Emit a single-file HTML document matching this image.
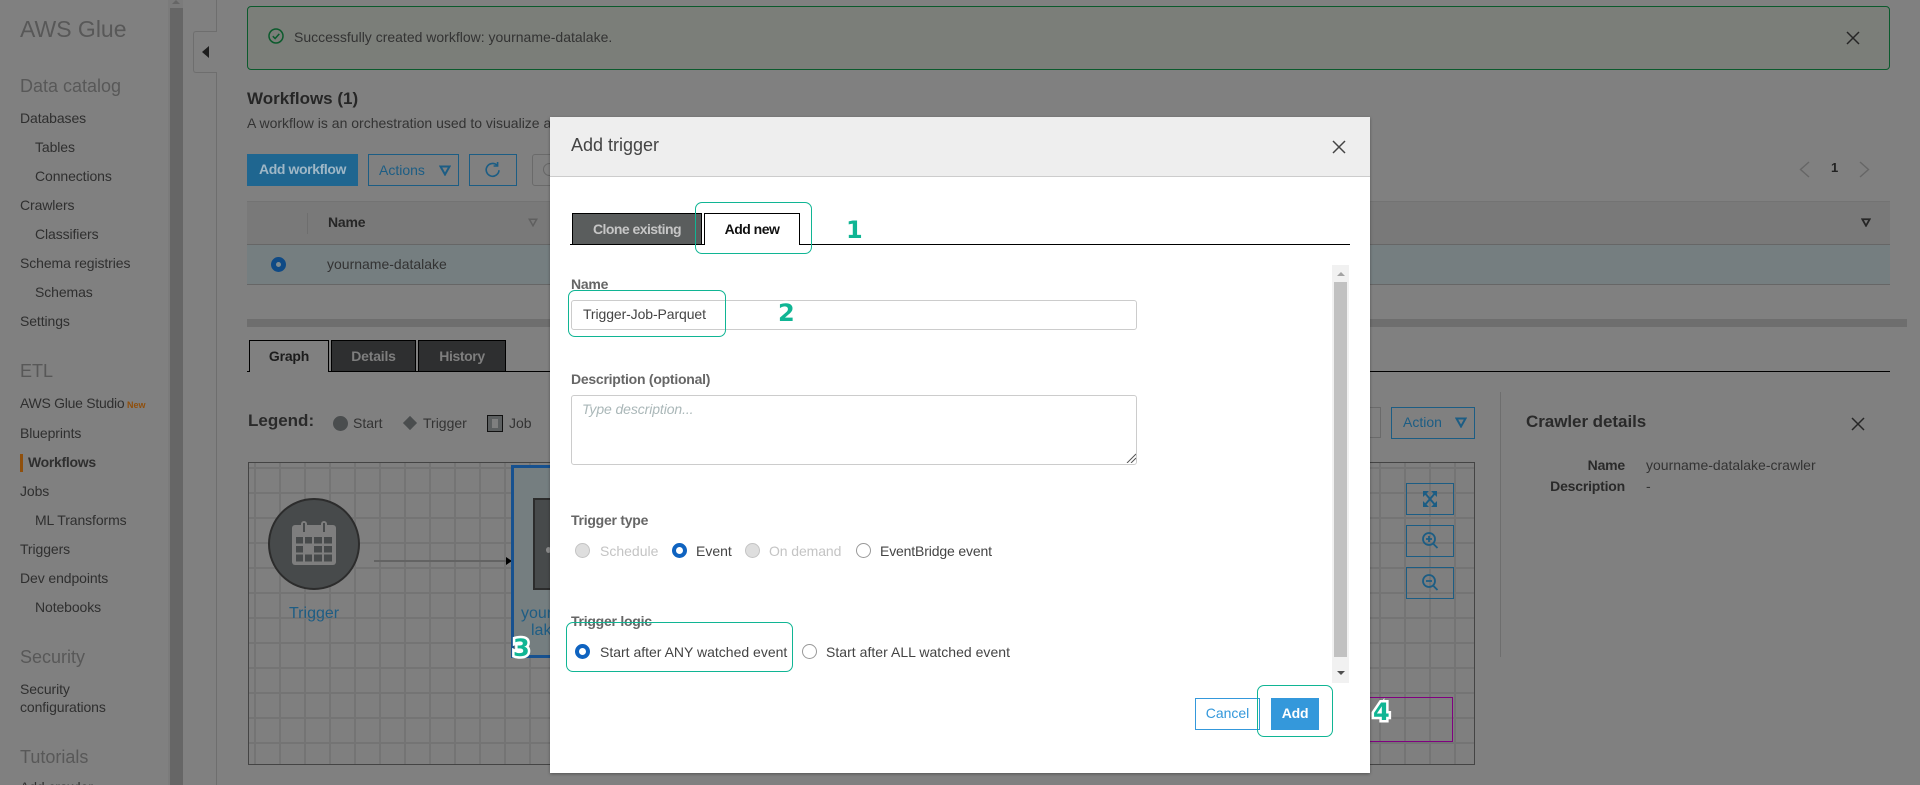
<!DOCTYPE html>
<html><head><meta charset="utf-8"><title>AWS Glue Add trigger</title>
<style>
*{box-sizing:border-box}
html,body{margin:0;padding:0;width:1920px;height:785px;overflow:hidden;background:#808080}
body{position:relative;font-family:"Liberation Sans",sans-serif;font-size:14px;color:#2d2d2d}
.a{position:absolute}
.t{position:absolute;white-space:nowrap;line-height:20px;height:20px}
.n{color:#2f2f2f;font-size:14px;letter-spacing:-.1px}
.h{color:#585858;font-size:18px}
.b{font-weight:bold}
.lbl{color:#666;font-weight:bold;font-size:14px;letter-spacing:-.25px}
.r{position:absolute;width:15px;height:15px;border-radius:50%;background:#fff;border:1px solid #999}
.r.d{background:#dedede;border-color:#c4c4c4}
.r.s{background:#fff;border:4px solid #0f63c0}
.g{position:absolute;border:1.5px solid #10b594;border-radius:7px}
.num{position:absolute;font-family:"DejaVu Sans",sans-serif;font-weight:bold;font-size:24px;line-height:26px;color:#10b594;-webkit-text-stroke:5px #fff;paint-order:stroke fill}
.zb{position:absolute;left:1406px;width:48px;height:32px;border:1px solid #1c5d84}
.zb svg{position:absolute;left:0;top:0}
</style></head><body>

<!-- sidebar -->
<div class="a" style="left:168px;top:0;width:15px;height:785px;background:#7b7b7b"></div>
<div class="a" style="left:170px;top:8px;width:13px;height:777px;background:#666"></div>
<div class="a" style="left:172px;top:0;width:0;height:0;border:4px solid transparent;border-top:0;border-bottom:4px solid #666"></div>
<div class="t" style="left:20px;top:19px;font-size:23px;color:#585858">AWS Glue</div>
<div class="t h" style="left:20px;top:76px">Data catalog</div>
<div class="t n" style="left:20px;top:108px">Databases</div>
<div class="t n" style="left:35px;top:137px">Tables</div>
<div class="t n" style="left:35px;top:166px">Connections</div>
<div class="t n" style="left:20px;top:195px">Crawlers</div>
<div class="t n" style="left:35px;top:224px">Classifiers</div>
<div class="t n" style="left:20px;top:253px">Schema registries</div>
<div class="t n" style="left:35px;top:282px">Schemas</div>
<div class="t n" style="left:20px;top:311px">Settings</div>
<div class="t h" style="left:20px;top:361px">ETL</div>
<div class="t n" style="left:20px;top:393px;letter-spacing:-.27px">AWS Glue Studio</div>
<div class="t b" style="left:127px;top:395px;font-size:9px;color:#8f4f0c">New</div>
<div class="t n" style="left:20px;top:423px">Blueprints</div>
<div class="a" style="left:20px;top:454px;width:3px;height:18px;background:#8f4f0c"></div>
<div class="t n b" style="left:28px;top:452px;letter-spacing:-.3px">Workflows</div>
<div class="t n" style="left:20px;top:481px">Jobs</div>
<div class="t n" style="left:35px;top:510px">ML Transforms</div>
<div class="t n" style="left:20px;top:539px">Triggers</div>
<div class="t n" style="left:20px;top:568px">Dev endpoints</div>
<div class="t n" style="left:35px;top:597px">Notebooks</div>
<div class="t h" style="left:20px;top:647px">Security</div>
<div class="t n" style="left:20px;top:679px">Security</div>
<div class="t n" style="left:20px;top:697px">configurations</div>
<div class="t h" style="left:20px;top:747px">Tutorials</div>
<div class="t n" style="left:20px;top:777px">Add crawler</div>

<!-- collapse handle -->
<div class="a" style="left:216px;top:0;width:1px;height:785px;background:#6e6e6e"></div>
<div class="a" style="left:193px;top:31px;width:24px;height:42px;background:#808080;border:1px solid #6e6e6e;border-right:0;border-radius:3px 0 0 3px"></div>
<div class="a" style="left:202px;top:46px;width:0;height:0;border:6px solid transparent;border-left:0;border-right:7px solid #1d1d1d"></div>

<!-- flash -->
<div class="a" style="left:247px;top:6px;width:1643px;height:64px;background:#7b7e79;border:1px solid #0b5a2c;border-radius:4px"></div>
<svg class="a" style="left:267px;top:27px" width="18" height="18" viewBox="0 0 18 18" fill="none" stroke="#0b5a2c" stroke-width="1.5"><circle cx="9" cy="9" r="7"/><path d="M5.8 9.2l2.3 2.3 4.2-4.6"/></svg>
<div class="t" style="left:294px;top:27px;color:#333">Successfully created workflow: yourname-datalake.</div>
<svg class="a" style="left:1846px;top:31px" width="14" height="14" viewBox="0 0 14 14" stroke="#262626" stroke-width="1.5"><path d="M1 1l12 12M13 1L1 13"/></svg>

<!-- workflows heading -->
<div class="t b" style="left:247px;top:89px;font-size:17px;color:#262626">Workflows (1)</div>
<div class="t" style="left:247px;top:113px;color:#333">A workflow is an orchestration used to visualize and manage</div>

<!-- toolbar -->
<div class="a" style="left:247px;top:154px;width:111px;height:32px;background:#1f6690;color:#9fb7c6;font-weight:bold;line-height:31px;text-align:center;letter-spacing:-.4px">Add workflow</div>
<div class="a" style="left:368px;top:154px;width:91px;height:32px;border:1px solid #1c5d84;color:#1c5d84;line-height:30px;padding-left:10px">Actions</div>
<svg class="a" style="left:439px;top:165px" width="12" height="11" viewBox="0 0 12 11" fill="none" stroke="#1c5d84" stroke-width="2"><path d="M1.5 1.5h9L6 9.5z"/></svg>
<div class="a" style="left:469px;top:154px;width:48px;height:32px;border:1px solid #1c5d84"></div>
<svg class="a" style="left:484px;top:161px" width="18" height="18" viewBox="0 0 18 18" fill="none" stroke="#1c5d84" stroke-width="1.6"><path d="M15 9.2a6.4 6.4 0 1 1-2-5"/><path d="M13.6 1v4h-4" /></svg>
<div class="a" style="left:532px;top:154px;width:60px;height:32px;border:1px solid #6a6a6a;border-radius:3px"></div>
<div class="a" style="left:543px;top:163px;width:13px;height:13px;border:1.5px solid #666;border-radius:50%"></div>
<svg class="a" style="left:1795px;top:160px" width="80" height="20" viewBox="0 0 80 20" fill="none" stroke="#666" stroke-width="1.4"><path d="M14 2L5.500 9.500 14 17M65 2l8.500 7.500L65 17"/></svg>
<div class="t b" style="left:1831px;top:158px;font-size:13px;color:#222">1</div>

<!-- table -->
<div class="a" style="left:247px;top:201px;width:1643px;height:44px;background:#797979;border-top:1px solid #737373;border-bottom:1px solid #666"></div>
<div class="a" style="left:307px;top:213px;width:1px;height:21px;background:#6e6e6e"></div>
<div class="t b" style="left:328px;top:212px;color:#262626;letter-spacing:-.2px">Name</div>
<svg class="a" style="left:528px;top:218px" width="10" height="9" viewBox="0 0 12 11" fill="none" stroke="#5f5f5f" stroke-width="1.8"><path d="M1.500 1.500h9L6 9.500z"/></svg>
<svg class="a" style="left:1861px;top:218px" width="10" height="9" viewBox="0 0 12 11" fill="none" stroke="#262626" stroke-width="2.2"><path d="M1.500 1.500h9L6 9.500z"/></svg>
<div class="a" style="left:247px;top:245px;width:1643px;height:40px;background:#757e80;border-bottom:1px solid #666"></div>
<div class="a" style="left:271px;top:257px;width:15px;height:15px;border-radius:50%;background:#7f8b8f;border:5px solid #0f4a85"></div>
<div class="t" style="left:327px;top:254px;color:#333">yourname-datalake</div>

<!-- splitter -->
<div class="a" style="left:247px;top:319px;width:1660px;height:8px;background:#6e6e6e"></div>

<!-- lower tabs -->
<div class="a" style="left:247px;top:371px;width:1643px;height:1px;background:#000"></div>
<div class="a" style="left:249px;top:340px;width:80px;height:32px;background:#808080;border:1px solid #000;border-bottom:0;text-align:center;font-weight:bold;line-height:30px;color:#1c1c1c;letter-spacing:-.2px">Graph</div>
<div class="a" style="left:331px;top:340px;width:85px;height:32px;background:#2e2f30;border:1px solid #000;text-align:center;font-weight:bold;line-height:30px;color:#7e7e7e;letter-spacing:-.2px">Details</div>
<div class="a" style="left:418px;top:340px;width:88px;height:32px;background:#2e2f30;border:1px solid #000;text-align:center;font-weight:bold;line-height:30px;color:#7e7e7e;letter-spacing:-.4px">History</div>

<!-- legend -->
<div class="t b" style="left:248px;top:411px;font-size:17px;color:#2a2a2a">Legend:</div>
<div class="a" style="left:333px;top:416px;width:15px;height:15px;border-radius:50%;background:#4a4d4e"></div>
<div class="t" style="left:353px;top:413px;color:#333">Start</div>
<div class="a" style="left:405px;top:418px;width:10px;height:10px;background:#4a4d4e;transform:rotate(45deg)"></div>
<div class="t" style="left:423px;top:413px;color:#333">Trigger</div>
<div class="a" style="left:487px;top:415px;width:16px;height:17px;background:#5c5f60;border:1px solid #111"></div>
<div class="a" style="left:492px;top:419px;width:6px;height:9px;background:#7f7f7f"></div>
<div class="t" style="left:509px;top:413px;color:#333">Job</div>

<!-- graph -->
<div class="a" style="left:248px;top:462px;width:1227px;height:303px;border:1px solid #444;background-color:#7f7f7f;background-image:linear-gradient(#747474 2px,transparent 2px),linear-gradient(90deg,#747474 2px,transparent 2px);background-size:25px 25px;background-position:0 4px,5px 0"></div>
<div class="a" style="left:268px;top:498px;width:92px;height:92px;border-radius:50%;background:#474a4b;border:2px solid #2c2c2c"></div>
<svg class="a" style="left:292px;top:520px" width="44" height="46" viewBox="0 0 44 46">
<rect x="0" y="5" width="44" height="40" rx="3" fill="#7e7e7e"/>
<rect x="9" y="1" width="6" height="12" rx="3" fill="#7e7e7e"/><rect x="29" y="1" width="6" height="12" rx="3" fill="#7e7e7e"/>
<rect x="11" y="3" width="2" height="9" fill="#474a4b"/><rect x="31" y="3" width="2" height="9" fill="#474a4b"/>
<g fill="#474a4b">
<rect x="4" y="17" width="7" height="6.500"/><rect x="13" y="17" width="7" height="6.500"/><rect x="22" y="17" width="8" height="6.500"/><rect x="32" y="17" width="8" height="6.500"/>
<rect x="4" y="26" width="7" height="6.500"/><rect x="22" y="26" width="8" height="6.500"/><rect x="32" y="26" width="8" height="6.500"/>
<rect x="4" y="34.500" width="7" height="7"/><rect x="13" y="34.500" width="7" height="7"/><rect x="22" y="34.500" width="8" height="7"/><rect x="32" y="34.500" width="8" height="7"/>
</g></svg>
<div class="t" style="left:289px;top:604px;font-size:16px;color:#1e5d84">Trigger</div>
<div class="a" style="left:374px;top:560px;width:134px;height:2px;background:#636363"></div>
<div class="a" style="left:506px;top:557px;width:0;height:0;border:4px solid transparent;border-right:0;border-left:6px solid #000"></div>
<div class="a" style="left:511px;top:465px;width:60px;height:193px;border:3px solid #17518f;background:#757e80"></div>
<div class="a" style="left:533px;top:498px;width:30px;height:92px;background:#474a4b;border:2px solid #2c2c2c"></div>
<div class="a" style="left:546px;top:547px;width:5px;height:6px;border-radius:50%;background:#8a8a8a"></div>
<div class="t" style="left:521px;top:604px;font-size:16px;color:#1e5d84">yourname-</div>
<div class="t" style="left:531px;top:621px;font-size:16px;color:#1e5d84">lake</div>
<div class="a" style="left:1100px;top:697px;width:353px;height:45px;border:1px solid #800080"></div>

<div class="zb" style="top:483px"><svg width="46" height="30" viewBox="0 0 46 30"><g fill="none" stroke="#1c5d84" stroke-width="2"><path d="M17 8l12 14M29 8L17 22"/></g><path d="M16 7h6l-6 6zM30 7h-6l6 6zM16 23h6l-6-6zM30 23h-6l6-6z" fill="#1c5d84"/></svg></div>
<div class="zb" style="top:525px"><svg width="46" height="30" viewBox="0 0 46 30" fill="none" stroke="#1c5d84" stroke-width="1.800"><circle cx="22" cy="13" r="6"/><path d="M26.500 18l4 4M19 13h6M22 10v6"/></svg></div>
<div class="zb" style="top:567px"><svg width="46" height="30" viewBox="0 0 46 30" fill="none" stroke="#1c5d84" stroke-width="1.800"><circle cx="22" cy="13" r="6"/><path d="M26.500 18l4 4M19 13h6"/></svg></div>

<!-- graph toolbar & crawler panel -->
<div class="a" style="left:1340px;top:407px;width:41px;height:31px;border:1px solid #6a6a6a"></div>
<div class="a" style="left:1391px;top:407px;width:84px;height:32px;border:1px solid #1c5d84;color:#1c5d84;line-height:29px;padding-left:11px">Action</div>
<svg class="a" style="left:1455px;top:417px" width="12" height="11" viewBox="0 0 12 11" fill="none" stroke="#1c5d84" stroke-width="2"><path d="M1.500 1.500h9L6 9.500z"/></svg>
<div class="a" style="left:1500px;top:392px;width:1px;height:265px;background:#6e6e6e"></div>
<div class="t b" style="left:1526px;top:412px;font-size:17px;color:#2a2a2a;letter-spacing:-.05px">Crawler details</div>
<svg class="a" style="left:1851px;top:417px" width="14" height="14" viewBox="0 0 14 14" stroke="#262626" stroke-width="1.500"><path d="M1 1l12 12M13 1L1 13"/></svg>
<div class="t b" style="left:1525px;width:100px;top:455px;text-align:right;color:#2a2a2a;letter-spacing:-.2px">Name</div>
<div class="t" style="left:1646px;top:455px;color:#333">yourname-datalake-crawler</div>
<div class="t b" style="left:1525px;width:100px;top:476px;text-align:right;color:#2a2a2a;letter-spacing:-.2px">Description</div>
<div class="t" style="left:1646px;top:476px;color:#333">-</div>

<!-- modal -->
<div class="a" style="left:550px;top:117px;width:820px;height:656px;background:#fff;box-shadow:0 1px 3px rgba(0,0,0,.35)"></div>
<div class="a" style="left:550px;top:117px;width:820px;height:60px;background:#eee;border-bottom:1px solid #ccc"></div>
<div class="t" style="left:571px;top:135px;font-size:18px;color:#444">Add trigger</div>
<svg class="a" style="left:1332px;top:140px" width="14" height="14" viewBox="0 0 14 14" stroke="#444" stroke-width="1.500"><path d="M1 1l12 12M13 1L1 13"/></svg>

<div class="a" style="left:570px;top:244px;width:780px;height:1px;background:#000"></div>
<div class="a" style="left:572px;top:213px;width:130px;height:32px;background:#5a5d5d;border:1px solid #000;text-align:center;font-weight:bold;line-height:30px;color:#c6c6c6;letter-spacing:-.55px">Clone existing</div>
<div class="a" style="left:704px;top:213px;width:96px;height:32px;background:#fff;border:1px solid #000;border-bottom:0;text-align:center;font-weight:bold;line-height:30px;color:#111;letter-spacing:-.5px">Add new</div>

<div class="t lbl" style="left:571px;top:274px">Name</div>
<div class="a" style="left:571px;top:300px;width:566px;height:30px;border:1px solid #ccc;border-radius:3px;background:#fff;line-height:27px;padding-left:11px;color:#444;letter-spacing:-.1px">Trigger-Job-Parquet</div>
<div class="t lbl" style="left:571px;top:369px">Description (optional)</div>
<div class="a" style="left:571px;top:395px;width:566px;height:70px;border:1px solid #ccc;border-radius:3px;background:#fff"></div>
<div class="t" style="left:582px;top:399px;font-style:italic;color:#aab7b8;letter-spacing:-.1px">Type description...</div>
<svg class="a" style="left:1126px;top:453px" width="10" height="10" viewBox="0 0 10 10" stroke="#555" stroke-width="1"><path d="M1 10L10 1M5 10l5-5"/></svg>

<div class="t lbl" style="left:571px;top:510px">Trigger type</div>
<div class="r d" style="left:575px;top:543px"></div>
<div class="t" style="left:600px;top:541px;color:#c4c4c4">Schedule</div>
<div class="r s" style="left:672px;top:543px"></div>
<div class="t" style="left:696px;top:541px;color:#444">Event</div>
<div class="r d" style="left:745px;top:543px"></div>
<div class="t" style="left:769px;top:541px;color:#c4c4c4;letter-spacing:-.1px">On demand</div>
<div class="r" style="left:856px;top:543px"></div>
<div class="t" style="left:880px;top:541px;color:#444;letter-spacing:-.15px">EventBridge event</div>

<div class="t lbl" style="left:571px;top:611px">Trigger logic</div>
<div class="r s" style="left:575px;top:644px"></div>
<div class="t" style="left:600px;top:642px;color:#444">Start after ANY watched event</div>
<div class="r" style="left:802px;top:644px"></div>
<div class="t" style="left:826px;top:642px;color:#444;letter-spacing:.03px">Start after ALL watched event</div>

<!-- modal scrollbar -->
<div class="a" style="left:1332px;top:265px;width:17px;height:418px;background:#f1f1f1"></div>
<div class="a" style="left:1334px;top:282px;width:13px;height:375px;background:#c1c1c1"></div>
<div class="a" style="left:1337px;top:272px;width:0;height:0;border:4px solid transparent;border-top:0;border-bottom:4px solid #a3a3a3"></div>
<div class="a" style="left:1337px;top:671px;width:0;height:0;border:4px solid transparent;border-bottom:0;border-top:4px solid #505050"></div>

<div class="a" style="left:1195px;top:698px;width:65px;height:32px;border:1px solid #3498db;color:#3498db;line-height:29px;text-align:center">Cancel</div>
<div class="a" style="left:1271px;top:698px;width:48px;height:32px;background:#3498db;color:#fff;font-weight:bold;line-height:31px;text-align:center;letter-spacing:-.2px">Add</div>

<!-- annotations -->
<div class="g" style="left:695px;top:202px;width:117px;height:52px"></div>
<div class="g" style="left:568px;top:290px;width:158px;height:47px"></div>
<div class="g" style="left:566px;top:622px;width:227px;height:50px"></div>
<div class="g" style="left:1257px;top:685px;width:76px;height:52px"></div>
<div class="num" style="left:846px;top:217px">1</div>
<div class="num" style="left:778px;top:300px">2</div>
<div class="num" style="left:513px;top:635px">3</div>
<div class="num" style="left:1373px;top:699px">4</div>
</body></html>
